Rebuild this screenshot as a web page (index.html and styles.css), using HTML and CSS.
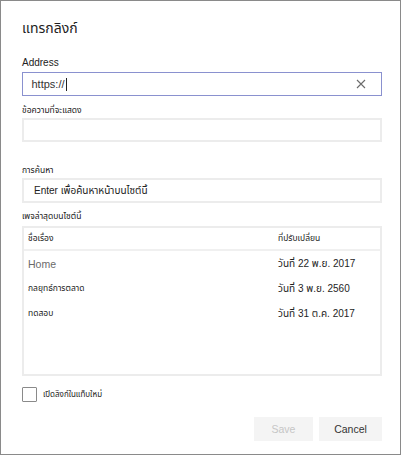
FILE: index.html
```html
<!DOCTYPE html>
<html lang="th">
<head>
<meta charset="utf-8">
<title>แทรกลิงก์</title>
<link rel="stylesheet" href="styles.css">
</head>
<body>
<div class="dialog">
  <div class="title">แทรกลิงก์</div>

  <div class="label label-address">Address</div>
  <div class="field field-active">
    <span class="field-text">https://<span class="caret"></span></span>
    <svg class="clear" width="10" height="10" viewBox="0 0 10 10" aria-hidden="true">
      <path d="M1 1 L9 9 M9 1 L1 9" stroke="#6b6b6b" stroke-width="1.1" fill="none"/>
    </svg>
  </div>

  <div class="label label-display">ข้อความที่จะแสดง</div>
  <div class="field"></div>

  <div class="label label-search">การค้นหา</div>
  <div class="field field-search"><span class="placeholder">Enter เพื่อค้นหาหน้าบนไซต์นี้</span></div>

  <div class="label label-recent">เพจล่าสุดบนไซต์นี้</div>
  <div class="table">
    <div class="row head">
      <div class="cell th">ชื่อเรื่อง</div>
      <div class="cell th">ที่ปรับเปลี่ยน</div>
    </div>
    <div class="row">
      <div class="cell name latin">Home</div>
      <div class="cell date">วันที่ 22 พ.ย. 2017</div>
    </div>
    <div class="row">
      <div class="cell name">กลยุทธ์การตลาด</div>
      <div class="cell date">วันที่ 3 พ.ย. 2560</div>
    </div>
    <div class="row">
      <div class="cell name">ทดสอบ</div>
      <div class="cell date">วันที่ 31 ต.ค. 2017</div>
    </div>
  </div>

  <label class="check">
    <span class="box"></span>
    <span class="check-label">เปิดลิงก์ในแท็บใหม่</span>
  </label>

  <div class="actions">
    <button class="btn btn-save" disabled>Save</button>
    <button class="btn btn-cancel">Cancel</button>
  </div>
</div>
</body>
</html>
```

FILE: styles.css
```css
html, body {
  margin: 0;
  padding: 0;
  background: #ffffff;
}

body {
  font-family: "Liberation Sans", "Noto Sans Thai", "Tahoma", "DejaVu Sans", sans-serif;
  color: #222;
}

.dialog {
  width: 401px;
  height: 455px;
  box-sizing: border-box;
  border: 1px solid #8a8a8a;
  padding: 17px 18px 0 21px;
  display: flex;
  flex-direction: column;
}

.title {
  height: 20px;
  line-height: 20px;
  font-size: 14px;
  color: #1e1e1e;
}

.label {
  height: 12px;
  line-height: 12px;
  font-size: 8.5px;
  color: #222;
}

.label-address { margin-top: 19px; font-size: 10px; }
.label-display { margin-top: 8px; }
.label-search { margin-top: 22px; }
.label-recent { margin-top: 7px; }

.field {
  height: 24px;
  box-sizing: border-box;
  border: 2px solid #ececec;
  margin-top: 2px;
  display: flex;
  align-items: center;
  justify-content: space-between;
  padding: 0 15px 0 8px;
}

.field-active {
  margin-top: 3px;
  border: 1.5px solid #8a91cf;
  padding-left: 8.5px;
}

.field-search {
  height: 25px;
}

.field-text {
  font-size: 11px;
  color: #333;
  display: flex;
  align-items: center;
}

.caret {
  display: inline-block;
  width: 1px;
  height: 13px;
  background: #222;
  margin-left: 1px;
}

.clear {
  display: block;
}

.placeholder {
  font-size: 10px;
  color: #222;
  padding-left: 2px;
}

.table {
  margin-top: 4px;
  height: 150px;
  box-sizing: border-box;
  border: 2px solid #ececec;
  display: flex;
  flex-direction: column;
}

.row {
  display: grid;
  grid-template-columns: 250px 1fr;
  height: 25px;
  align-items: center;
  padding-left: 4px;
}

.row.head {
  height: 21px;
  border-bottom: 2px solid #f0f0f0;
}

.cell {
  font-size: 8.5px;
  color: #222;
  white-space: nowrap;
}

.name.latin {
  font-size: 10.5px;
  color: #6a6a6a;
}

.date {
  font-size: 10px;
  color: #1e1e1e;
}

.check {
  margin-top: 11px;
  height: 15px;
  display: flex;
  align-items: center;
  gap: 6px;
}

.box {
  width: 15px;
  height: 15px;
  box-sizing: border-box;
  border: 1.5px solid #8a8a8a;
  border-radius: 1px;
}

.check-label {
  font-size: 8px;
  color: #222;
}

.actions {
  margin-top: 15px;
  display: flex;
  justify-content: flex-end;
  gap: 6px;
}

.btn {
  height: 24px;
  border: none;
  background: #f4f4f4;
  font-family: "Liberation Sans", "DejaVu Sans", sans-serif;
  font-size: 10.5px;
  padding: 0;
  cursor: default;
}

.btn-save {
  width: 59px;
  color: #c6c6c6;
}

.btn-cancel {
  width: 63px;
  color: #333;
}
```
